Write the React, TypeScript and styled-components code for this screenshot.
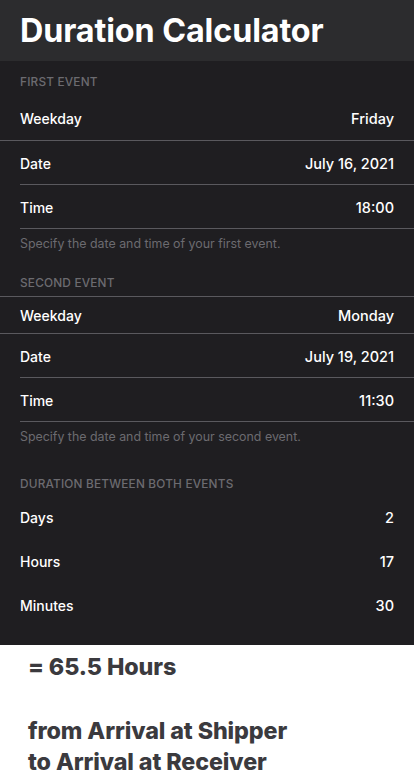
import React from "react";
import styled, { createGlobalStyle } from "styled-components";

const Global = createGlobalStyle`
  html, body { margin: 0; padding: 0; background: #ffffff; }
  body { font-family: Inter, "Liberation Sans", sans-serif; -webkit-font-smoothing: antialiased; }
`;

const Page = styled.div`
  width: 414px;
  display: flex;
  flex-direction: column;
`;

const Header = styled.header`
  height: 61px;
  background: #2c2c2e;
  display: flex;
  align-items: center;
  padding: 0 20px;
  box-sizing: border-box;
`;

const Title = styled.h1`
  margin: 0;
  color: #ffffff;
  font-size: 32.3px;
  font-weight: 700;
  letter-spacing: -0.1px;
`;

const Body = styled.main`
  background: #1f1e21;
  padding: 14px 0 18px;
  display: flex;
  flex-direction: column;
`;

const Section = styled.section<{ $gap?: number }>`
  display: flex;
  flex-direction: column;
  margin-top: ${(p) => p.$gap ?? 0}px;
`;

const SectionTitle = styled.div<{ $pad?: number }>`
  padding: 0 20px ${(p) => p.$pad ?? 6}px;
  color: #6c6b70;
  font-size: 11.8px;
  font-weight: 500;
  letter-spacing: 0.2px;
  text-transform: uppercase;
  line-height: 14px;
`;

const Row = styled.div<{ $line?: "full" | "inset" | "none"; $top?: boolean; $h?: number }>`
  height: ${(p) => p.$h ?? 44}px;
  display: flex;
  align-items: center;
  justify-content: space-between;
  padding: 0 20px;
  position: relative;
  color: #ffffff;
  font-size: 14px;
  font-weight: 500;
  ${(p) => (p.$top ? "border-top: 1px solid #5a595e;" : "")}
  &::after {
    content: "";
    display: ${(p) => (p.$line === "none" || !p.$line ? "none" : "block")};
    position: absolute;
    bottom: 0;
    left: ${(p) => (p.$line === "full" ? 0 : 20)}px;
    right: 0;
    height: 1px;
    background: #5a595e;
  }
`;

const Value = styled.span`
  color: #ffffff;
  font-size: 14.5px;
`;

const Footnote = styled.div`
  padding: 8px 20px 0;
  color: #6c6b70;
  font-size: 12.4px;
  line-height: 14px;
`;

const Summary = styled.section`
  background: #ffffff;
  padding: 9px 28px 0;
  color: #3b3a3e;
  font-size: 23.3px;
  font-weight: 800;
  letter-spacing: -0.1px;
`;

const Total = styled.div`
  line-height: 26px;
  margin-bottom: 35px;
`;

const Route = styled.div`
  line-height: 31px;
`;

type Item = { label: string; value: string };

const first: Item[] = [
  { label: "Weekday", value: "Friday" },
  { label: "Date", value: "July 16, 2021" },
  { label: "Time", value: "18:00" },
];
const second: Item[] = [
  { label: "Weekday", value: "Monday" },
  { label: "Date", value: "July 19, 2021" },
  { label: "Time", value: "11:30" },
];
const duration: Item[] = [
  { label: "Days", value: "2" },
  { label: "Hours", value: "17" },
  { label: "Minutes", value: "30" },
];

export default function App() {
  return (
    <Page>
      <Global />
      <Header>
        <Title>Duration Calculator</Title>
      </Header>
      <Body>
        <Section>
          <SectionTitle>First Event</SectionTitle>
          {first.map((it, i) => (
            <Row key={it.label} $line={i === 0 ? "full" : "inset"} $h={i === 0 ? 46 : 44}>
              <span>{it.label}</span>
              <Value>{it.value}</Value>
            </Row>
          ))}
          <Footnote>Specify the date and time of your first event.</Footnote>
        </Section>
        <Section $gap={25}>
          <SectionTitle>Second Event</SectionTitle>
          {second.map((it, i) => (
            <Row key={it.label} $top={i === 0} $line={i === 0 ? "full" : "inset"} $h={i === 0 ? 37 : 44}>
              <span>{it.label}</span>
              <Value>{it.value}</Value>
            </Row>
          ))}
          <Footnote>Specify the date and time of your second event.</Footnote>
        </Section>
        <Section $gap={33}>
          <SectionTitle $pad={4}>Duration between both events</SectionTitle>
          {duration.map((it) => (
            <Row key={it.label} $line="none">
              <span>{it.label}</span>
              <Value>{it.value}</Value>
            </Row>
          ))}
        </Section>
      </Body>
      <Summary>
        <Total>= 65.5 Hours</Total>
        <Route>from Arrival at Shipper</Route>
        <Route>to Arrival at Receiver</Route>
      </Summary>
    </Page>
  );
}
